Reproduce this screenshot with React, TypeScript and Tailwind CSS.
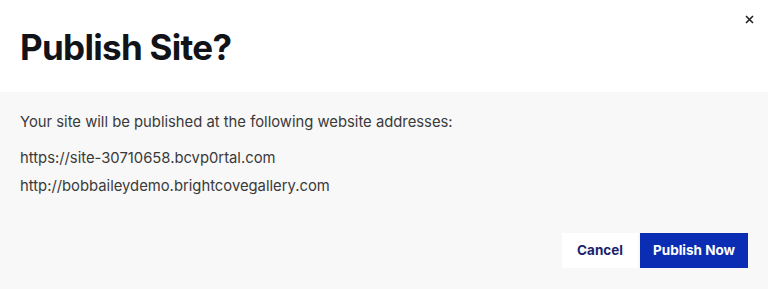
import React from "react";

export default function App() {
  return (
    <div className="w-[768px] h-[289px] flex flex-col bg-[#f8f8f8]" style={{ fontFamily: "Inter, 'Liberation Sans', sans-serif" }}>
      <div className="h-[92px] bg-white flex items-start justify-between pl-[20px] pr-[12px]">
        <h1 className="mt-[25px] text-[35px] leading-[44px] font-bold text-[#111318] tracking-[-0.7px]">Publish Site?</h1>
        <button className="mt-[12px] w-[14px] h-[14px] flex items-center justify-center text-[#222]">
          <svg width="9" height="9" viewBox="0 0 9 9" fill="none" stroke="currentColor" strokeWidth="1.6">
            <path d="M1 1L8 8M8 1L1 8" />
          </svg>
        </button>
      </div>
      <div className="flex-1 flex flex-col px-[20px] pt-[20px] text-[14.8px] text-[#3a3a3a]">
        <p className="leading-[20px]">Your site will be published at the following website addresses:</p>
        <p className="mt-[16px] leading-[20px]">https://site-30710658.bcvp0rtal.com</p>
        <p className="mt-[8px] leading-[20px]">http://bobbaileydemo.brightcovegallery.com</p>
        <div className="mt-auto mb-[21px] flex justify-end gap-[2px]">
          <button className="h-[35px] w-[76px] bg-white text-[#1b1f6e] text-[13.5px] font-bold">Cancel</button>
          <button className="h-[35px] w-[108px] bg-[#0a2db3] text-white text-[13.5px] font-bold">Publish Now</button>
        </div>
      </div>
    </div>
  );
}
